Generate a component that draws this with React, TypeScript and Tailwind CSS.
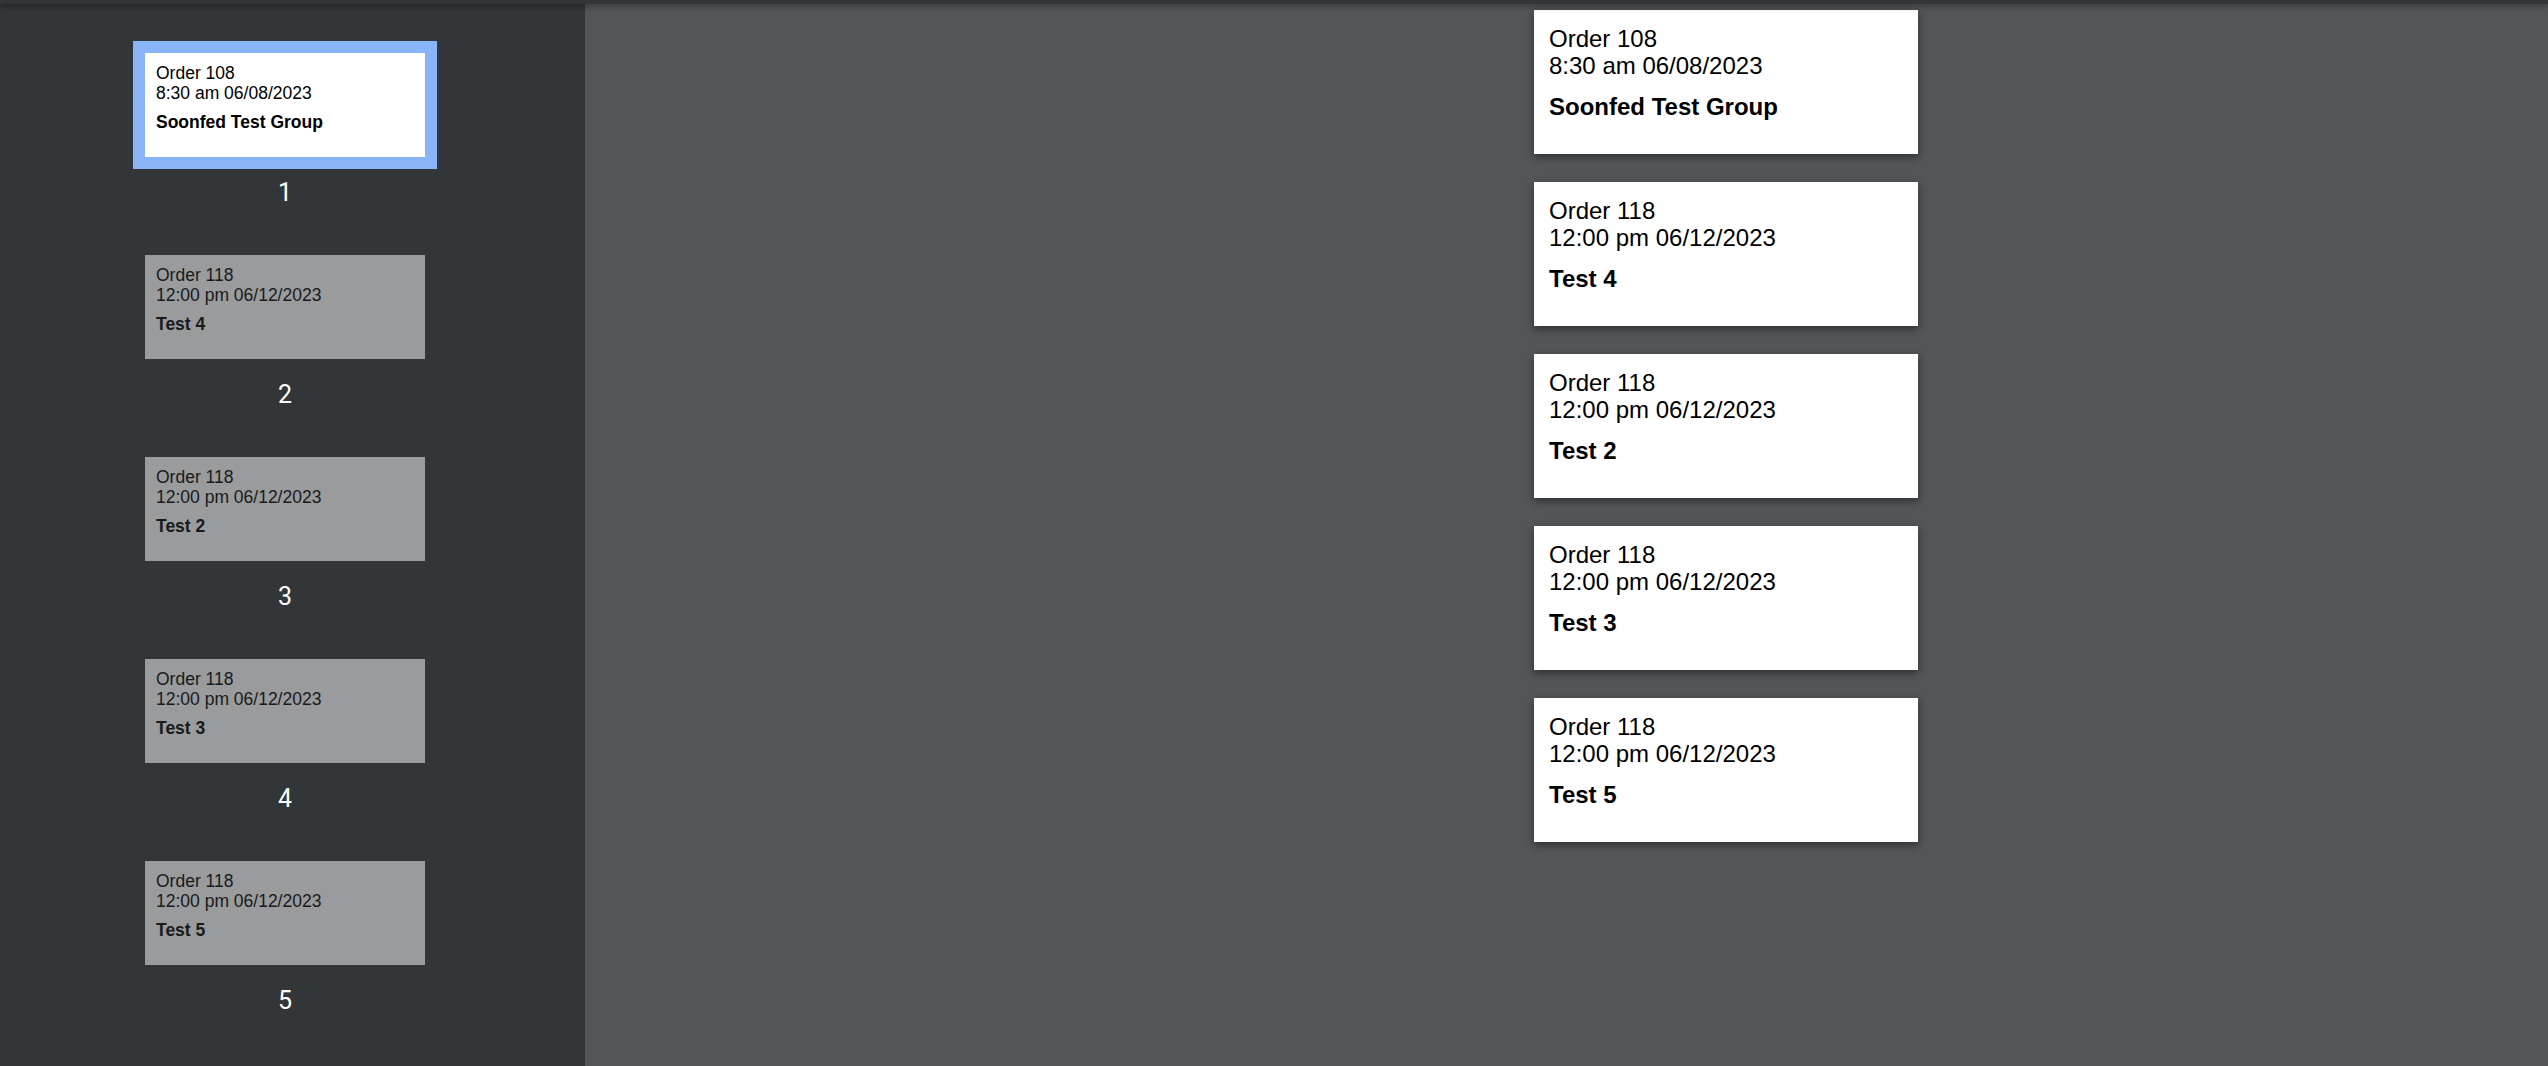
const pages = [
  { order: "Order 108", when: "8:30 am 06/08/2023", name: "Soonfed Test Group" },
  { order: "Order 118", when: "12:00 pm 06/12/2023", name: "Test 4" },
  { order: "Order 118", when: "12:00 pm 06/12/2023", name: "Test 2" },
  { order: "Order 118", when: "12:00 pm 06/12/2023", name: "Test 3" },
  { order: "Order 118", when: "12:00 pm 06/12/2023", name: "Test 5" },
];

const pdfFont = { fontFamily: '"Liberation Sans", Arial, sans-serif' };

export default function App() {
  return (
    <div className="h-[1066px] w-full overflow-hidden flex flex-col bg-[#525659]">
      <div className="h-[4px] shrink-0 bg-[#323639] shadow-[0_2px_6px_rgba(0,0,0,0.45)] relative z-10" />
      <div className="flex flex-1 min-h-0">
        {/* thumbnails */}
        <aside className="w-[585px] shrink-0 bg-[#323639] pt-[37px] pl-[133px] flex flex-col gap-[35px]">
          {pages.map((p, i) => (
            <div key={i} className="w-[304px] flex flex-col items-center">
              <div
                className={
                  i === 0
                    ? "w-[304px] h-[128px] border-[12px] border-[#8ab4f8]"
                    : "w-[304px] h-[128px] border-[12px] border-transparent"
                }
              >
                <div
                  className={
                    i === 0
                      ? "h-full w-full bg-white text-black p-[11px] text-[17.5px] leading-[19.7px]"
                      : "h-full w-full bg-white text-black p-[11px] text-[17.5px] leading-[19.7px] opacity-50"
                  }
                  style={pdfFont}
                >
                  <div>{p.order}</div>
                  <div>{p.when}</div>
                  <div className="font-bold mt-[10px]">{p.name}</div>
                </div>
              </div>
              <div
                className="mt-[8px] h-[31px] leading-[31px] text-[25px] text-white"
                style={{ fontFamily: "Roboto, sans-serif" }}
              >
                {i + 1}
              </div>
            </div>
          ))}
        </aside>

        {/* pages */}
        <main className="flex-1 pt-[6px] pl-[949px] flex flex-col gap-[28px]">
          {pages.map((p, i) => (
            <div
              key={i}
              className="w-[384px] h-[144px] shrink-0 bg-white text-black p-[15px] text-[24px] leading-[27px] shadow-[0_3px_8px_rgba(0,0,0,0.45)]"
              style={pdfFont}
            >
              <div>{p.order}</div>
              <div>{p.when}</div>
              <div className="font-bold mt-[14px]">{p.name}</div>
            </div>
          ))}
        </main>
      </div>
    </div>
  );
}
